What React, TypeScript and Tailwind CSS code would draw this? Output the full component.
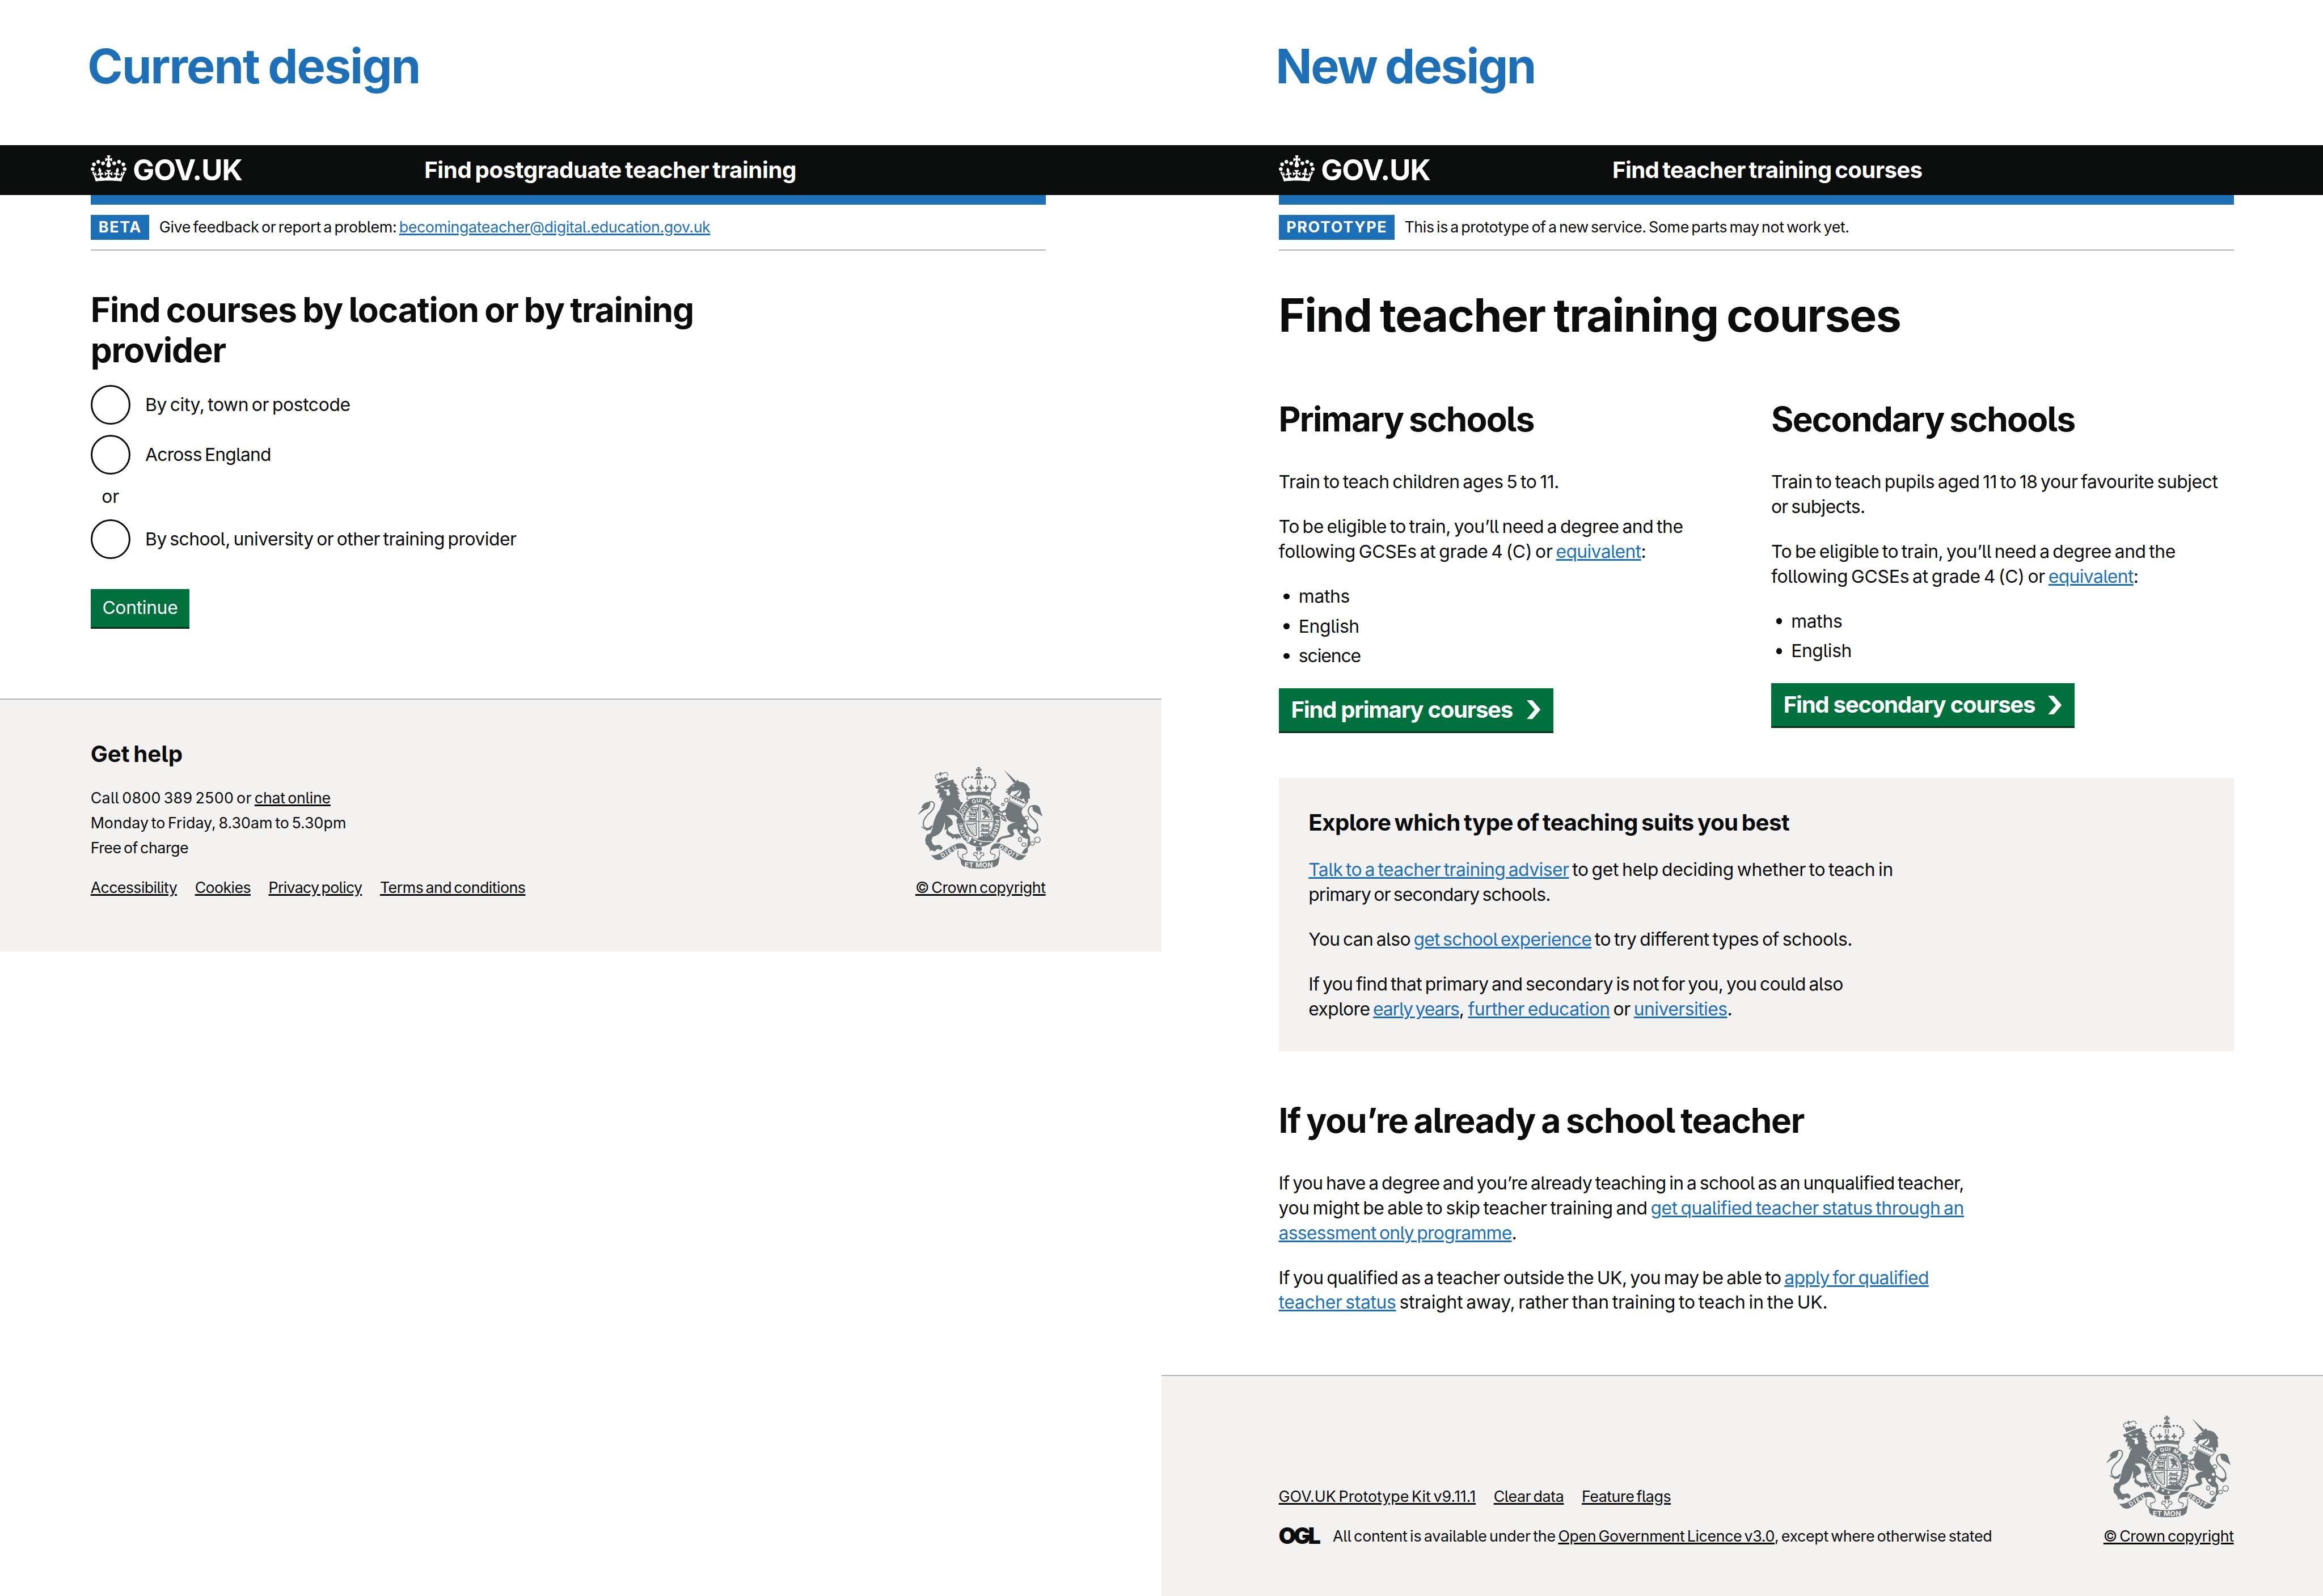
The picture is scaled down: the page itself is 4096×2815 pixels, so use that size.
import type { ReactNode } from "react";

/* One rem equals sixteen CSS pixels of the boards at their drawn scale. */
const rootScale = "html{font-size:28.0668px}";

/* A line of copy with its own tracking; lines never rewrap. */
function Line({ children, t = "" }: { children: ReactNode; t?: string }) {
  return (
    <span className="block w-max whitespace-pre">
      <span className={t}>{children}</span>
    </span>
  );
}

function Blue({ children, t }: { children: ReactNode; t: string }) {
  return (
    <a className={`text-[#1d70b8] underline decoration-[2.6px] underline-offset-[2px] ${t}`}>{children}</a>
  );
}

function Dark({ children, t }: { children: ReactNode; t: string }) {
  return <a className={`underline decoration-[2.6px] underline-offset-[2px] ${t}`}>{children}</a>;
}

function Crown() {
  return (
    <svg viewBox="0 0 132 97" className="mb-[0.19rem] h-[1.654rem] w-9 shrink-0 fill-white">
      <path
        fillRule="evenodd"
        d="M25 30.2c3.5 1.5 7.7-.2 9.1-3.7 1.5-3.6-.2-7.8-3.9-9.2-3.6-1.4-7.6.3-9.1 3.9-1.4 3.5.3 7.5 3.9 9zM9 39.5c3.6 1.5 7.8-.2 9.2-3.7 1.5-3.6-.2-7.8-3.9-9.1-3.6-1.5-7.6.2-9.1 3.8-1.4 3.5.3 7.5 3.8 9zM4.4 57.2c3.5 1.5 7.7-.2 9.1-3.8 1.5-3.6-.2-7.7-3.9-9.1-3.5-1.5-7.6.3-9.1 3.8-1.4 3.5.3 7.6 3.9 9.1zm38.3-21.4c3.5 1.5 7.7-.2 9.1-3.8 1.5-3.6-.2-7.7-3.9-9.1-3.6-1.5-7.6.3-9.1 3.8-1.3 3.6.4 7.7 3.9 9.1zm64.4-5.6c-3.6 1.5-7.8-.2-9.1-3.7-1.5-3.6.2-7.8 3.8-9.2 3.6-1.4 7.7.3 9.2 3.9 1.3 3.5-.4 7.5-3.9 9zm15.9 9.3c-3.6 1.5-7.7-.2-9.1-3.7-1.5-3.6.2-7.8 3.7-9.1 3.6-1.5 7.7.2 9.2 3.8 1.5 3.5-.3 7.5-3.8 9zm4.7 17.7c-3.6 1.5-7.8-.2-9.2-3.8-1.5-3.6.2-7.7 3.9-9.1 3.6-1.5 7.7.3 9.2 3.8 1.3 3.5-.4 7.6-3.9 9.1zM89.3 35.8c-3.6 1.5-7.8-.2-9.2-3.8-1.4-3.6.2-7.7 3.9-9.1 3.6-1.5 7.7.3 9.2 3.8 1.4 3.6-.3 7.7-3.9 9.1zM69.7 17.7l8.9 4.7V9.3l-8.9 2.8c-.2-.3-.5-.6-.9-.9L72.4 0H59.6l3.5 11.2c-.3.3-.6.5-.9.9l-8.8-2.8v13.1l8.8-4.7c.3.3.6.7.9.9l-5 15.4v.1c-.2.8-.4 1.6-.4 2.4 0 4.1 3.1 7.5 7 8.1h.2c.3 0 .7.1 1 .1.4 0 .7 0 1-.1h.2c4-.6 7.1-4.1 7.1-8.1 0-.8-.1-1.7-.4-2.4V34l-5.1-15.4c.4-.2.7-.6 1-.9zM66 92.8c16.9 0 32.8 1.1 47.1 3.2 4-16.9 8.9-26.7 14-33.5l-9.6-3.4c1 4.9 1.1 7.2 0 10.2-1.5-1.4-3-4.3-4.2-8.7L108.6 76c2.8-2 5-3.2 7.5-3.3-4.4 9.4-10 11.9-13.6 11.2-4.3-.8-6.3-4.6-5.6-7.9 1-4.7 5.7-5.9 8-.5 4.3-8.7-3-11.4-7.6-8.8 7.1-7.2 7.9-13.5 2.1-21.1-8 6.1-8.1 12.3-4.5 20.8-4.7-5.4-12.1-2.5-9.5 6.2 3.4-5.2 7.9-2 7.2 3.1-.6 4.3-6.4 7.8-13.5 7.2-10.3-.9-10.9-8-11.2-13.8 2.5-.5 7.1 1.8 11 7.3L80.2 60c-4.1 4.4-8 5.3-12.3 5.4 1.4-4.4 8-11.6 8-11.6H55.5s6.4 7.2 7.9 11.6c-4.2-.1-8-1-12.3-5.4l1.4 16.4c3.9-5.5 8.5-7.7 10.9-7.3-.3 5.8-.9 12.8-11.1 13.8-7.2.6-12.9-2.9-13.5-7.2-.7-5 3.8-8.3 7.1-3.1 2.7-8.7-4.6-11.6-9.4-6.2 3.7-8.5 3.6-14.7-4.6-20.8-5.8 7.6-5 13.9 2.2 21.1-4.7-2.6-11.9.1-7.7 8.8 2.3-5.5 7.1-4.2 8.1.5.7 3.3-1.3 7.1-5.7 7.9-3.5.7-9-1.8-13.5-11.2 2.5.1 4.7 1.3 7.5 3.3l-4.7-15.4c-1.2 4.4-2.7 7.2-4.3 8.7-1.1-3-.9-5.3 0-10.2l-9.5 3.4c5 6.9 9.9 16.7 14 33.5 14.8-2.1 30.8-3.2 47.7-3.2z"
      />
    </svg>
  );
}

function HeaderBar({ title, inset, t }: { title: string; inset: string; t: string }) {
  return (
    <header className={`flex h-12.5 items-center bg-[#0b0c0c] text-white ${inset}`}>
      <div className="flex w-[20.97rem] shrink-0 items-center">
        <Crown />
        <span className="ml-[0.41rem] text-[1.806rem] leading-none font-bold tracking-[-0.019em]">GOV.UK</span>
      </div>
      <span className={`text-[1.434rem] leading-none font-bold whitespace-nowrap ${t}`}>{title}</span>
    </header>
  );
}

function PhaseBanner({ tag, tagW, children }: { tag: string; tagW: string; children: ReactNode }) {
  return (
    <div className="border-b-2 border-[#b1b4b6] pb-2.5">
      <div className="h-2.5 bg-[#1d70b8]" />
      <div className="flex pt-2.5 text-[0.956rem] leading-6.25">
        <strong
          className={`mr-2.5 h-6.25 bg-[#1d70b8] pl-px text-center font-bold tracking-[0.061em] whitespace-nowrap text-white ${tagW}`}
        >
          {tag}
        </strong>
        {children}
      </div>
    </div>
  );
}

function Radio({ label, t }: { label: string; t: string }) {
  return (
    <label className="flex items-center leading-10">
      <span className="mr-3.75 size-10 rounded-full border-[3.5px] border-[#0b0c0c]" />
      <span className={t}>{label}</span>
    </label>
  );
}

function Bullets({ children }: { children: ReactNode }) {
  return <ul className="mb-5 flex flex-col gap-1.25">{children}</ul>;
}

function Bullet({ children, t }: { children: ReactNode; t: string }) {
  return (
    <li className="flex items-center">
      <span className="mr-[0.57rem] ml-1.25 size-1.5 rounded-full bg-[#0b0c0c]" />
      <span className={t}>{children}</span>
    </li>
  );
}

function StartButton({ label, size }: { label: string; size: string }) {
  return (
    <button
      className={`flex h-11.25 items-center justify-between border-b-[3.5px] border-[#002d18] bg-[#00703c] pr-[0.81rem] pl-[0.78rem] text-[1.434rem] leading-none font-bold tracking-[-0.033em] whitespace-nowrap text-white ${size}`}
    >
      <span>{label}</span>
      <svg viewBox="0 0 83 114" className="h-4.75 w-3.875 fill-white" preserveAspectRatio="none">
        <path d="M0 0h34l49 57-49 57H0l48-57z" />
      </svg>
    </button>
  );
}

/* A fleur-de-lis leaf that sits on a crown's rim. */
function Fleur({ x, y }: { x: number; y: number }) {
  return (
    <path
      transform={`translate(${x} ${y})`}
      d="M0-17q9 12 4 22 2-8 9-5 6 5 1 12-4-6-9 0-1 8-5 12-4-4-5-12-5-6-9 0-5-7 1-12 7-3 9 5-5-10 5-22z"
    />
  );
}

function Cross({ x, y, s }: { x: number; y: number; s: number }) {
  return (
    <path
      transform={`translate(${x} ${y}) scale(${s})`}
      d="M-9-16H9L3-3 16-9V9L3 3 9 16H-9L-3 3-16 9V-9L-3-3z"
    />
  );
}

/* A passant lion in the quarters of the shield. */
function Passant({ x, y }: { x: number; y: number }) {
  return (
    <path
      transform={`translate(${x} ${y})`}
      d="M0 6l6-4-4-5 8-3 6 3 4 3 12-2 10 2 5-8-3-4 6 2 3 6-6 8 6 8-6 1-6-6-6 7h-5l2-6-9-1-4 8h-6l3-7-6-1-5 5z"
    />
  );
}

const pearls: [number, number][] = [
  [545, 193], [523, 187], [501, 187], [483, 194], [471, 206], [465, 220], [464, 234], [469, 247],
];

function RoyalArms() {
  const bg = "#f3f2f1";
  const ink = "#6f777b";
  return (
    <svg
      viewBox="198 126 750 612"
      className="h-25.5 w-31.25 tracking-normal [word-spacing:0]"
      fill={ink}
      fontFamily="Inter, sans-serif"
    >
      {/* crown */}
      <Cross x={563} y={142} s={1} />
      <path d="M544 177q4-15 14-18h10q10 3 14 18zM545 182h37q-3 15-15 18h-7q-12-3-15-18zM552 205h6v28h-6zM568 205h6v28h-6z" />
      {pearls.map(([x, y]) => (
        <g key={x}>
          <circle cx={x} cy={y} r="6.5" />
          <circle cx={1127 - x} cy={y} r="6.5" />
        </g>
      ))}
      <Fleur x={519} y={246} />
      <Fleur x={607} y={246} />
      <Cross x={563} y={254} s={0.95} />
      <path d="M472 250l16 4 4 10-8 6 6 8q8-2 14-1 10 4 18-2 6-4 12-1 14 4 18-6h22q4 10 18 6 6-3 12 1 8 6 18 2 6-1 14 1l6-8-8-6 4-10 16-4q-14 22-17 48-74-18-148 0-4-26-17-48z" />

      {/* garter and shield */}
      <ellipse cx="564" cy="457" rx="130" ry="148" />
      <path d="M498 300q66-14 132 0 10 12 2 24-68-24-136 0-8-12 2-24z" fill={bg} stroke={ink} strokeWidth="5" />
      <ellipse cx="564" cy="455" rx="90" ry="107" fill={bg} />
      <ellipse cx="564" cy="455" rx="87" ry="104" fill="none" stroke={ink} strokeWidth="3" />
      <path d="M564 350v212M476 455h176" stroke={ink} strokeWidth="5" />
      <Passant x={510} y={379} />
      <Passant x={502} y={406} />
      <Passant x={500} y={435} />
      <path d="M514 368h42v5h-42zM498 394h58v4h-58zM490 421h64v4h-64zM492 446h62v4h-62z" />
      <path d="M574 364q34 6 52 32 12 20 14 48h-66z" fill="none" stroke={ink} strokeWidth="4" />
      <path d="M584 382l12 4 8-6 8 12 12 8-4 14 10 14-6 10-10-14-8 4-10 12-12-4 12-8 2-10-12-2 8-10-10-8z" />
      <path d="M490 468q30 8 58-4l1 72q-2 8-12 4-34-24-47-72z" fill="none" stroke={ink} strokeWidth="6" />
      <path d="M502 474l36 54M514 474l28 38M528 472l16 22M498 486l32 42" stroke={ink} strokeWidth="3" />
      <Passant x={576} y={474} />
      <Passant x={576} y={501} />
      <Passant x={574} y={528} />
      <path d="M572 486h66v4h-66zM572 512h62v4h-62zM566 548q26-4 44-14l-14 32-46 2z" />
      <path id="garter-line" d="M564 571A98 116 0 0 1 564 339 98 116 0 0 1 564 571" fill="none" />
      <g fill={bg} fontSize="33" fontWeight="700" textAnchor="middle">
        <text><textPath href="#garter-line" startOffset="112">HON</textPath></text>
        <text><textPath href="#garter-line" startOffset="236">SOIT</textPath></text>
        <text><textPath href="#garter-line" startOffset="326">QUI</textPath></text>
        <text><textPath href="#garter-line" startOffset="408">MAL</textPath></text>
        <text><textPath href="#garter-line" startOffset="466">Y</textPath></text>
        <text><textPath href="#garter-line" startOffset="546">PENSE</textPath></text>
      </g>
      <path d="M488 545q28-12 40 6-6 22-24 34-20 6-18-16 8-4 2-24z" fill={bg} />
      <path d="M500 546q20-8 26 4-8 26-28 34-8-2-8-12 12-4 10-26z" fill="none" stroke={ink} strokeWidth="4" />
      <path d="M520 552q50 34 124 18l20-14q-30 44-90 50-44 2-70-22 14-10 16-32z" />
      <path d="M526 552q44 30 116 22" fill="none" stroke={bg} strokeWidth="5" />
      <circle cx="539" cy="577" r="7" fill={bg} />
      <circle cx="574" cy="589" r="7" fill={bg} />

      {/* lion */}
      <path
        d="M298 241l28-10q34-20 68-26l17-4 2 19 24 17-12 2 20 24-14 1 20 25-16-1 10 18-6 4 16 26 14 4-18 30-8 30q18 12 28 34l3 34-12 4-6-12-6 18-10-14-8 10-4-26 8-18-20-14q-28-4-50 1 10 4 26 18 18 18 14 38l-26 18q-8 10 4 26l26 14 32-2 16 14-8 16-10-8-8 12-12-12-14 8-12-14q-20-6-28-22l4-22-14 4q6-20 2-48-6 32-22 58-14 22-50 32l-8 20q4 24 20 32l30-4 18 16-8 16-24-8-16 16-20-8-12 6 2-10q-10-24-24-32l-4-28 10-30q18-2 26-14 12-30 14-56 12-46 40-84 12-40 22-60l-18 14 6-26-14 8v-38l-14 12 8-34-12 2z"
        stroke={bg}
        strokeWidth="4"
        paintOrder="stroke"
      />
      <path d="M328 236l30 6-14 8zM370 240l22-8-8 12zM350 260q20 4 36-2l-4 10q10 6 8 24-12 14-22 0l2-20-14-4z" fill={bg} />
      <path d="M412 374l44 36 14 34" fill="none" stroke={bg} strokeWidth="5" />
      <path d="M312 212l62-20 4 12-60 20zM304 194l12 6 5-8 11 7 4-12 13 9 8-11 9 7 9-10-3 18-56 14z" />
      <path d="M326 158l8-3 2 7 7-1 1 8-8 1 2 9-7 1-2-8-7 2-2-8 8-2z" />
      <circle cx="303" cy="190" r="4.5" />
      <circle cx="303" cy="179" r="4.5" />
      <circle cx="312" cy="171" r="4.5" />
      <circle cx="348" cy="163" r="4.5" />
      <circle cx="360" cy="159" r="4.5" />
      <circle cx="371" cy="162" r="4.5" />
      <circle cx="377" cy="172" r="4.5" />
      <path d="M262 338q28-10 34 12 0 32-40 62-34 38-26 66 6 20 46 24" fill="none" stroke={ink} strokeWidth="7" />
      <path d="M270 336q-40-2-54 38l14-2-24 26-8 16q36-32 58-36 18-20 14-42zM214 482q26 18 50 8l18-14 4 8q-14 24-46 26l8-6q-24-4-34-22z" />

      {/* unicorn */}
      <path d="M714 141l76 72-12 12z" />
      <path d="M727 264q22-14 34-30l22-12 14-22 10 14q44 2 56 32l12 18-8 2q6 28 4 52l-10-2-2 30-14-6-10-26-14 8-50-24q28-14 38-34-24 10-48 8l-12 24-14-6 8-10-14 2-4-8 18-6z" />
      <path d="M762 240l14-4-4 8zM788 298q26-16 28-36l4 20q-4 18-22 24z" fill={bg} />
      <path d="M754 298l96 50-16 22-88-44z" fill={bg} stroke={ink} strokeWidth="4" />
      <path d="M762 306l6 14 8-8 6 14 10-8 4 16 12-8 4 14 12-6 2 14 16-10-78-38z" />
      <path d="M744 330l86 44q-18 24 2 48 26 28 28 64l-4 36 16 24 2 52-14 14-2 26-18 12-18-4 12-20 22-22 4-44-28-8q-34-28-38-52-22-2-24 8l8 24-14 14-64 12-14 22-18-2 14-22 18-10 56-14q-24-24-20-40 2-26 52-32-46 0-58-28-12-20-4-40l-28 6-18-20-14-2-8 10-14-12q-4-18 22-18l26 12-6 14-14-6 12 20 34 2z" />
      <path d="M740 380l-44 20-12-14-12-2 12 22 36 26 6 18-16-6-14-16" fill="none" stroke={ink} strokeWidth="8" />
      <path d="M858 488q30 36 54 18 18-30-16-66-36-28-34-54 6-32 38-24" fill="none" stroke={ink} strokeWidth="7" />
      <path d="M880 358q50-14 56 32l12 34q-30-22-46-26-18-12-14-32zM862 484q16 22 40 20l24-6q-4 18-22 30-14 0-42-38z" />
      <g fill="none" stroke={ink} strokeWidth="5">
        <ellipse cx="729" cy="325" rx="10" ry="12" fill={bg} />
        <ellipse cx="709" cy="351" rx="8" ry="7" />
        <ellipse cx="718" cy="408" rx="13" ry="12" fill={bg} />
        <circle cx="852" cy="434" r="12" fill={bg} />
        <ellipse cx="812" cy="563" rx="9" ry="13" fill={bg} />
        <ellipse cx="836" cy="593" rx="13" ry="10" fill={bg} />
        <ellipse cx="887" cy="587" rx="12" ry="11" />
        <circle cx="917" cy="565" r="17" />
      </g>
      <circle cx="843" cy="480" r="9" fill={bg} />
      <circle cx="821" cy="515" r="9" fill={bg} />

      {/* ribbon */}
      <path d="M274 657q30 4 56-12l74-44q38-24 66-12 20 12 25 48-16-22-40-20-18-2-36 12l-60 42q-34 26-60 10z" />
      <path d="M440 628q-10 36 14 52M494 632q0 18-22 20-18 6 0 24" fill="none" stroke={ink} strokeWidth="5" />
      <path d="M852 657q-30 4-56-12l-74-44q-38-24-66-12-20 12-25 48 16-22 40-20 18-2 36 12l60 42q34 26 60 10z" />
      <path d="M686 628q10 36-14 52M632 632q0 18 22 20 18 6 0 24" fill="none" stroke={ink} strokeWidth="5" />
      <path d="M450 670q20 20 60 22 53 8 106 0 40-2 74-22l-10 42q-12 26-117 26-96 0-105-28z" />
      <g fill={bg} fontWeight="700" textAnchor="middle">
        <text x="563" y="730" fontSize="42" textLength="170">ET MON</text>
        <text transform="translate(388 647) rotate(-31)" fontSize="36" textLength="106">DIEU</text>
        <text transform="translate(738 647) rotate(31)" fontSize="36" textLength="130">DROIT</text>
      </g>
      <path d="M547 608h34v22h-34z" />
      <path
        d="M563 624q16 16 6 30 6-14 18-12 12 6 4 18-8-4-14 4 0 10-8 12 0 12-6 12t-6-12q-8-2-8-12-6-8-14-4-8-12 4-18 12-2 18 12-10-14 6-30z"
        fill={bg}
        stroke={ink}
        strokeWidth="5"
      />
    </svg>
  );
}

function Copyright() {
  return (
    <div className="flex shrink-0 flex-col items-center gap-1.75">
      <RoyalArms />
      <Dark t="tracking-[-0.016em]">© Crown copyright</Dark>
    </div>
  );
}

function Eligibility() {
  return (
    <p className="mb-5">
      <Line t="tracking-[-0.013em]">To be eligible to train, you’ll need a degree and the</Line>
      <Line>
        <span className="tracking-[-0.008em]">following GCSEs at grade 4 (C) or </span>
        <Blue t="tracking-[-0.02em]">equivalent</Blue>:
      </Line>
    </p>
  );
}

export default function App() {
  return (
    <div className="grid min-h-[2815px] grid-cols-2 overflow-hidden bg-white text-[1.135rem] leading-6.25 text-[#0b0c0c] [word-spacing:-0.09em] [font-family:Inter,sans-serif] [font-feature-settings:'cv05']">
      <style>{rootScale}</style>

      <section className="flex flex-col">
        <h1 className="h-36.5 pt-[2.6rem] pl-22 text-[3.01rem] leading-12.5 font-bold text-[#1d70b8]">
          <Line t="tracking-[-0.023em]">Current design</Line>
        </h1>
        <HeaderBar title="Find postgraduate teacher training" inset="pl-22.75" t="tracking-[-0.011em]" />
        <main className="ml-22.75 w-240">
          <PhaseBanner tag="BETA" tagW="w-[3.69rem]">
            <Line>
              <span className="tracking-[-0.012em]">Give feedback or report a problem: </span>
              <Blue t="tracking-[-0.016em]">becomingateacher@digital.education.gov.uk</Blue>
            </Line>
          </PhaseBanner>
          <h2 className="mt-10 text-[2.151rem] leading-10 font-bold">
            <Line t="tracking-[-0.019em]">Find courses by location or by training</Line>
            <Line t="tracking-[-0.021em]">provider</Line>
          </h2>
          <div className="mt-3.75 flex flex-col gap-2.5">
            <Radio label="By city, town or postcode" t="tracking-[-0.012em]" />
            <Radio label="Across England" t="tracking-[-0.025em]" />
            <div className="w-10 text-center">or</div>
            <Radio label="By school, university or other training provider" t="tracking-[-0.017em]" />
          </div>
          <button className="mt-7.5 block h-10 w-[6.22rem] border-b-[3.5px] border-[#002d18] bg-[#00703c] text-center tracking-[-0.01em] text-white">
            Continue
          </button>
        </main>
        <footer className="mt-17.5 border-t-2 border-[#b1b4b6] bg-[#f3f2f1] pt-10 pb-[3.2rem] pl-22.75">
          <div className="flex w-240 items-end justify-between text-[0.956rem]">
            <div>
              <h3 className="mb-4.25 text-[1.434rem] leading-7.5 font-bold">
                <Line t="tracking-[0em]">Get help</Line>
              </h3>
              <p>
                <Line>
                  <span className="tracking-[0.011em]">Call 0800 389 2500 or </span>
                  <Dark t="tracking-[-0.01em]">chat online</Dark>
                </Line>
                <Line t="tracking-[0em]">Monday to Friday, 8.30am to 5.30pm</Line>
                <Line t="tracking-[-0.018em]">Free of charge</Line>
              </p>
              <nav className="mt-3.75 flex gap-4.5">
                <Dark t="tracking-[-0.024em]">Accessibility</Dark>
                <Dark t="tracking-[-0.024em]">Cookies</Dark>
                <Dark t="tracking-[-0.027em]">Privacy policy</Dark>
                <Dark t="tracking-[-0.02em]">Terms and conditions</Dark>
              </nav>
            </div>
            <Copyright />
          </div>
        </footer>
      </section>

      <section className="flex flex-col">
        <h1 className="h-36.5 pt-[2.6rem] pl-[7.17rem] text-[3.01rem] leading-12.5 font-bold text-[#1d70b8]">
          <Line t="tracking-[-0.029em]">New design</Line>
        </h1>
        <HeaderBar title="Find teacher training courses" inset="pl-[7.36rem]" t="tracking-[-0.017em]" />
        <main className="ml-[7.36rem] w-240">
          <PhaseBanner tag="PROTOTYPE" tagW="w-[7.28rem]">
            <Line t="tracking-[-0.014em]">This is a prototype of a new service. Some parts may not work yet.</Line>
          </PhaseBanner>
          <h2 className="mt-10 text-[2.868rem] leading-12.5 font-bold">
            <Line t="tracking-[-0.019em]">Find teacher training courses</Line>
          </h2>
          <div className="mt-15 grid grid-cols-2 gap-7.5">
            <div>
              <h3 className="mb-7.5 text-[2.151rem] leading-10 font-bold">
                <Line t="tracking-[-0.03em]">Primary schools</Line>
              </h3>
              <p className="mb-5">
                <Line t="tracking-[-0.012em]">Train to teach children ages 5 to 11.</Line>
              </p>
              <Eligibility />
              <Bullets>
                <Bullet t="tracking-[-0.01em]">maths</Bullet>
                <Bullet t="tracking-[-0.012em]">English</Bullet>
                <Bullet t="tracking-[-0.034em]">science</Bullet>
              </Bullets>
              <StartButton label="Find primary courses" size="w-[17.25rem]" />
            </div>
            <div>
              <h3 className="mb-7.5 text-[2.151rem] leading-10 font-bold">
                <Line t="tracking-[-0.029em]">Secondary schools</Line>
              </h3>
              <p className="mb-5">
                <Line t="tracking-[-0.014em]">Train to teach pupils aged 11 to 18 your favourite subject</Line>
                <Line t="tracking-[-0.019em]">or subjects.</Line>
              </p>
              <Eligibility />
              <Bullets>
                <Bullet t="tracking-[-0.01em]">maths</Bullet>
                <Bullet t="tracking-[-0.012em]">English</Bullet>
              </Bullets>
              <StartButton label="Find secondary courses" size="w-[19.06rem]" />
            </div>
          </div>
          <div className="mt-11.25 bg-[#f3f2f1] p-7.5">
            <h3 className="mb-5 text-[1.434rem] leading-7.5 font-bold">
              <Line t="tracking-[-0.013em]">Explore which type of teaching suits you best</Line>
            </h3>
            <p className="mb-5">
              <Line>
                <Blue t="tracking-[-0.017em]">Talk to a teacher training adviser</Blue>
                <span className="tracking-[-0.01em]"> to get help deciding whether to teach in</span>
              </Line>
              <Line t="tracking-[-0.027em]">primary or secondary schools.</Line>
            </p>
            <p className="mb-5">
              <Line>
                <span className="tracking-[-0.019em]">You can also </span>
                <Blue t="tracking-[-0.023em]">get school experience</Blue>
                <span className="tracking-[-0.013em]"> to try different types of schools.</span>
              </Line>
            </p>
            <p>
              <Line t="tracking-[-0.018em]">If you find that primary and secondary is not for you, you could also</Line>
              <Line>
                <span className="tracking-[-0.017em]">explore </span>
                <Blue t="tracking-[-0.036em]">early years</Blue>
                <span className="tracking-[0.008em]">, </span>
                <Blue t="tracking-[-0.015em]">further education</Blue>
                <span className="tracking-[-0.009em]"> or </span>
                <Blue t="tracking-[-0.017em]">universities</Blue>.
              </Line>
            </p>
          </div>
          <h3 className="mt-12.5 mb-7.5 text-[2.151rem] leading-10 font-bold">
            <Line t="tracking-[-0.021em]">If you’re already a school teacher</Line>
          </h3>
          <p className="mb-5">
            <Line t="tracking-[-0.019em]">
              If you have a degree and you’re already teaching in a school as an unqualified teacher,
            </Line>
            <Line>
              <span className="tracking-[-0.01em]">you might be able to skip teacher training and </span>
              <Blue t="tracking-[-0.013em]">get qualified teacher status through an</Blue>
            </Line>
            <Line>
              <Blue t="tracking-[-0.023em]">assessment only programme</Blue>.
            </Line>
          </p>
          <p>
            <Line>
              <span className="tracking-[-0.014em]">
                If you qualified as a teacher outside the UK, you may be able to{" "}
              </span>
              <Blue t="tracking-[-0.021em]">apply for qualified</Blue>
            </Line>
            <Line>
              <Blue t="tracking-[-0.011em]">teacher status</Blue>
              <span className="tracking-[-0.006em]"> straight away, rather than training to teach in the UK.</span>
            </Line>
          </p>
        </main>
        <footer className="mt-15 grow border-t-2 border-[#b1b4b6] bg-[#f3f2f1] pt-10 pl-[7.36rem]">
          <div className="flex w-240 items-end justify-between text-[0.956rem]">
            <div>
              <nav className="flex gap-4.5">
                <Dark t="tracking-[0em]">GOV.UK Prototype Kit v9.11.1</Dark>
                <Dark t="tracking-[-0.015em]">Clear data</Dark>
                <Dark t="tracking-[-0.018em]">Feature flags</Dark>
              </nav>
              <div className="mt-3.75 flex h-6.25 items-center">
                <span className="w-[3.4rem] shrink-0 text-[1.41rem] leading-6.25 font-black tracking-[-0.11em]">
                  OGL
                </span>
                <Line>
                  <span className="tracking-[-0.008em]">All content is available under the </span>
                  <Dark t="tracking-[-0.015em]">Open Government Licence v3.0</Dark>
                  <span className="tracking-[-0.013em]">, except where otherwise stated</span>
                </Line>
              </div>
            </div>
            <Copyright />
          </div>
        </footer>
      </section>
    </div>
  );
}
